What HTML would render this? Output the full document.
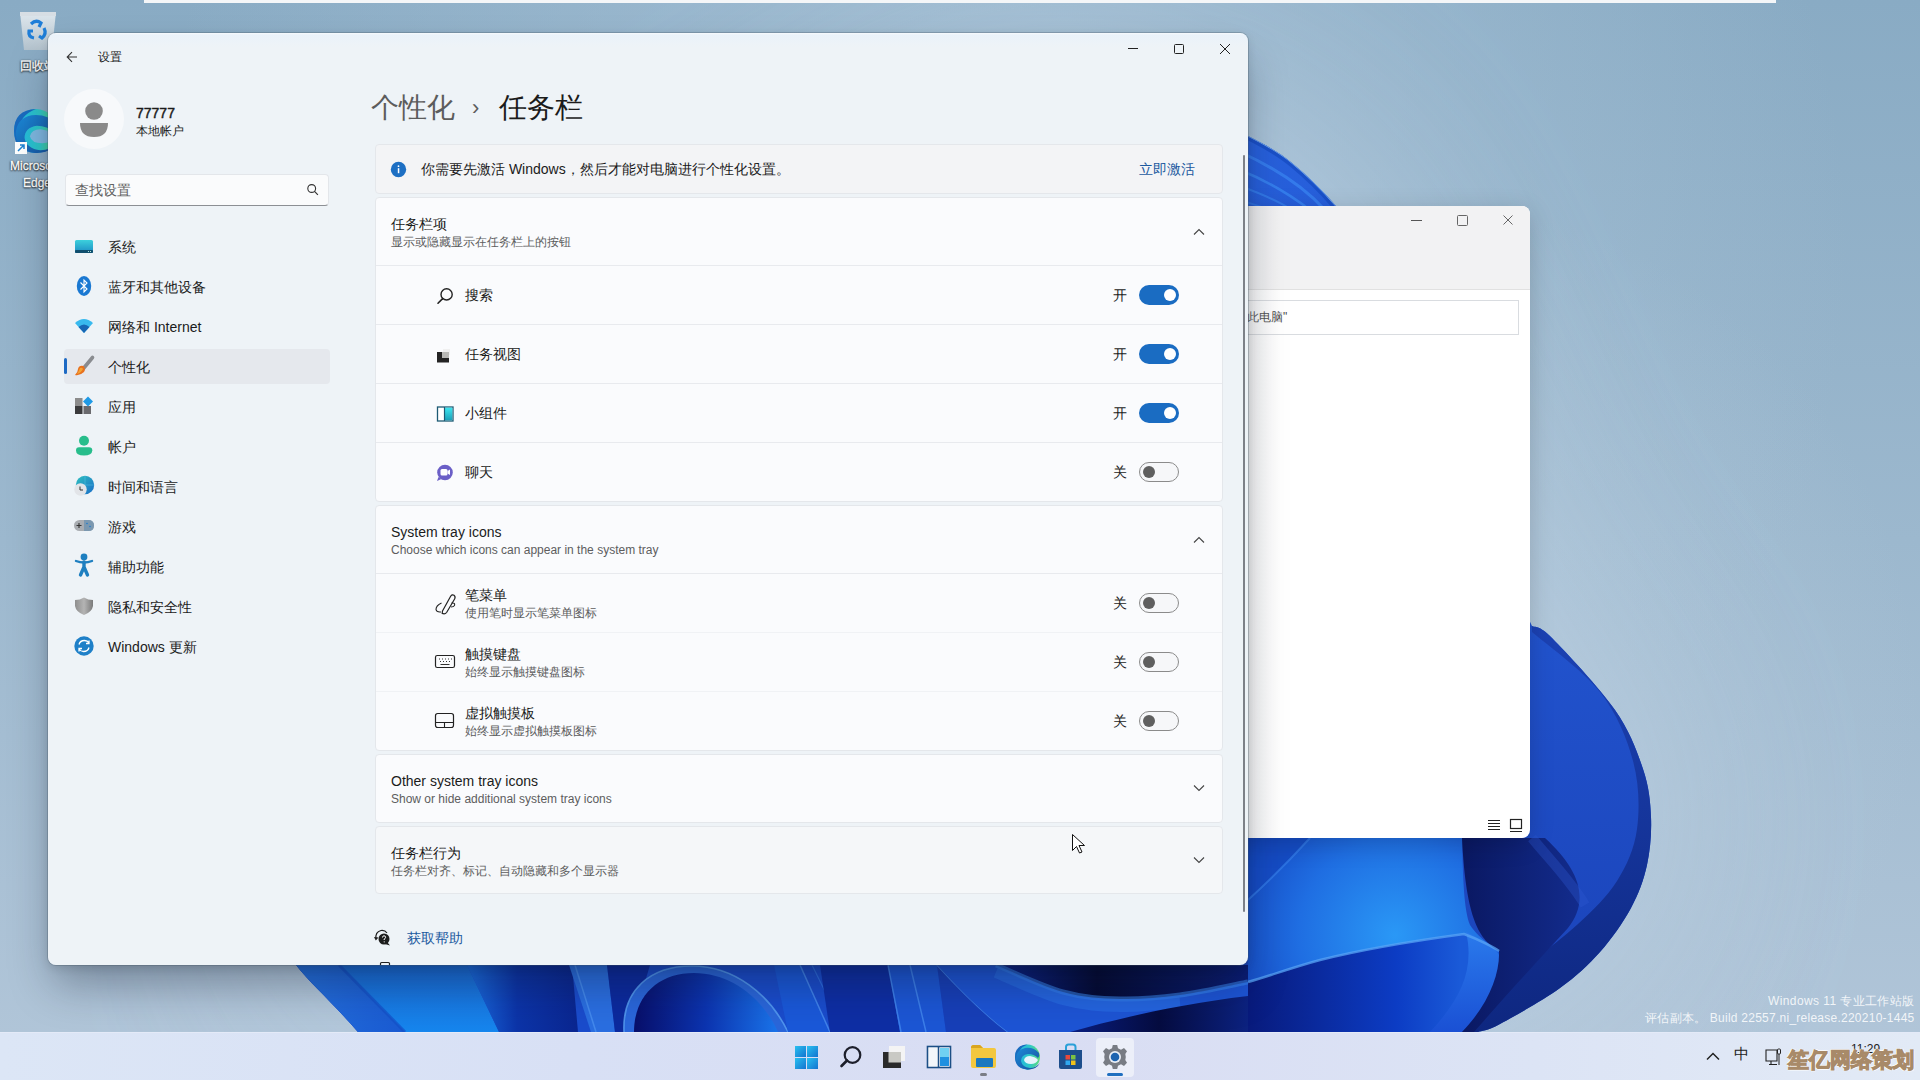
<!DOCTYPE html>
<html><head><meta charset="utf-8">
<style>
*{box-sizing:border-box;margin:0;padding:0}
html,body{width:1920px;height:1080px;overflow:hidden}
body{position:relative;font-family:"Liberation Sans",sans-serif;background:#9ab8cf;color:#1b1b1b}
.a{position:absolute}
#wall{position:absolute;left:0;top:0;width:1920px;height:1080px}
#topbar{position:absolute;left:144px;top:0;width:1632px;height:3px;background:#f4f6f8}
#win2{position:absolute;left:1230px;top:206px;width:300px;height:632px;background:#fff;border-radius:8px;box-shadow:0 6px 24px rgba(0,0,0,.18);overflow:hidden}
#win{position:absolute;left:48px;top:33px;width:1200px;height:932px;background:linear-gradient(#f7fafd 0,#eaf2fa 2px,#eef3f7 14px);border-radius:8px;box-shadow:0 0 0 1px rgba(70,85,100,.3),0 24px 44px -6px rgba(10,20,40,.36),0 3px 10px rgba(0,0,0,.12);overflow:hidden}
#wc{position:absolute;left:-48px;top:-33px;width:1920px;height:1080px}
#taskbar{position:absolute;left:0;top:1032px;width:1920px;height:48px;background:linear-gradient(90deg,#dce6f6,#d8e0f5 30%,#d9ddf3 55%,#dce4f5 80%,#e2eaf6);border-top:1px solid #e4eaf8}
.t{position:absolute;white-space:nowrap;line-height:16px;font-size:14px}
.s{font-size:12px;line-height:14px;color:#5d5d5d}
.card{position:absolute;left:375px;width:848px;background:#fafbfd;border:1px solid #e4e7eb;border-radius:4px}
.sep{position:absolute;left:376px;width:846px;height:1px;background:#e8eaee}
.tg{position:absolute;left:1139px;width:40px;height:20px;border-radius:10px}
.on{background:#1a6cc2}
.on:after{content:"";position:absolute;left:25px;top:4px;width:12px;height:12px;border-radius:6px;background:#fff}
.off{border:1px solid #8b8b8b;background:#f6f7f9}
.off:after{content:"";position:absolute;left:3px;top:3px;width:12px;height:12px;border-radius:6px;background:#5f5f5f}
.nav .t{left:108px}
</style></head>
<body>
<svg id="wall" viewBox="0 0 1920 1080" width="1920" height="1080">
<defs>
<filter id="halo" x="-50%" y="-50%" width="200%" height="200%"><feGaussianBlur stdDeviation="110"/></filter>
<linearGradient id="bg" x1="0" y1="0" x2="0" y2="1">
<stop offset="0" stop-color="#89abc4"/><stop offset=".5" stop-color="#9cb8ce"/><stop offset="1" stop-color="#b2c6d9"/>
</linearGradient>
<radialGradient id="hl" cx="1420" cy="700" r="500" gradientUnits="userSpaceOnUse">
<stop offset="0" stop-color="#b6cbdc" stop-opacity=".7"/><stop offset="1" stop-color="#b6cbdc" stop-opacity="0"/>
</radialGradient>
<radialGradient id="hl2" cx="1000" cy="250" r="850" gradientUnits="userSpaceOnUse"><stop offset="0" stop-color="#a9c3d7" stop-opacity=".85"/><stop offset=".5" stop-color="#a9c3d7" stop-opacity=".45"/><stop offset="1" stop-color="#a9c3d7" stop-opacity="0"/></radialGradient>
<linearGradient id="bl" x1="0" y1="0" x2="0" y2="1">
<stop offset="0" stop-color="#2862de"/><stop offset=".6" stop-color="#2152cc"/><stop offset="1" stop-color="#1a42b8"/>
</linearGradient>
<linearGradient id="rim" x1="0" y1="0" x2="0" y2="1">
<stop offset="0" stop-color="#1c42b4"/><stop offset="1" stop-color="#0e2780"/>
</linearGradient>
<radialGradient id="pet1" cx="1395" cy="935" r="175" gradientUnits="userSpaceOnUse">
<stop offset="0" stop-color="#2a98f6"/><stop offset=".55" stop-color="#1f6ee2"/><stop offset="1" stop-color="#1545c0"/>
</radialGradient>
<linearGradient id="strip" x1="296" y1="0" x2="1248" y2="0" gradientUnits="userSpaceOnUse">
<stop offset="0" stop-color="#2468dc"/>
<stop offset=".06" stop-color="#1d6ae4"/>
<stop offset=".14" stop-color="#2382ee"/>
<stop offset=".2" stop-color="#1656d4"/>
<stop offset=".25" stop-color="#0c2c9e"/>
<stop offset=".3" stop-color="#2c6ee2"/>
<stop offset=".36" stop-color="#0c2590"/>
<stop offset=".44" stop-color="#1a58d8"/>
<stop offset=".5" stop-color="#2a70e6"/>
<stop offset=".56" stop-color="#0e2c9c"/>
<stop offset=".63" stop-color="#2664da"/>
<stop offset=".7" stop-color="#1a56d4"/>
<stop offset=".78" stop-color="#0a1e78"/>
<stop offset=".85" stop-color="#2a74e6"/>
<stop offset=".93" stop-color="#1c4fcc"/>
<stop offset="1" stop-color="#1848c0"/>
</linearGradient>
<linearGradient id="navyg" x1="1462" y1="0" x2="1600" y2="0" gradientUnits="userSpaceOnUse"><stop offset="0" stop-color="#0a1862"/><stop offset="1" stop-color="#142f94"/></linearGradient>
<linearGradient id="s1" x1="0" y1="0" x2="1" y2="0"><stop offset="0" stop-color="#2470dc"/><stop offset="1" stop-color="#1a5ad2"/></linearGradient>
<linearGradient id="s2" x1="0" y1="0" x2="0" y2="1"><stop offset="0" stop-color="#1a6ad6"/><stop offset="1" stop-color="#1686ee"/></linearGradient>
<linearGradient id="s3" x1="0" y1="0" x2="1" y2="0"><stop offset="0" stop-color="#1a6ee2"/><stop offset=".45" stop-color="#0c34a8"/><stop offset="1" stop-color="#0a2690"/></linearGradient>
<linearGradient id="s4" x1="0" y1="0" x2="1" y2="0"><stop offset="0" stop-color="#080f6a"/><stop offset=".5" stop-color="#0c34b0"/><stop offset="1" stop-color="#1a74ea"/></linearGradient>
<linearGradient id="s5" x1="996" y1="0" x2="1248" y2="0" gradientUnits="userSpaceOnUse"><stop offset="0" stop-color="#0c2490"/><stop offset=".4" stop-color="#040a34"/><stop offset="1" stop-color="#0a1c74"/></linearGradient>
<linearGradient id="s6" x1="1070" y1="0" x2="1248" y2="0" gradientUnits="userSpaceOnUse"><stop offset="0" stop-color="#0a1e80"/><stop offset=".5" stop-color="#050c40"/><stop offset="1" stop-color="#0c2280"/></linearGradient>
<linearGradient id="low2" x1="1248" y1="0" x2="1460" y2="0" gradientUnits="userSpaceOnUse"><stop offset="0" stop-color="#081a7c"/><stop offset=".7" stop-color="#0c3cc4"/><stop offset="1" stop-color="#1a5ad8"/></linearGradient>
<linearGradient id="lipg" x1="0" y1="0" x2="0" y2="1"><stop offset="0" stop-color="#2a7aec"/><stop offset="1" stop-color="#1a50d4"/></linearGradient>
<linearGradient id="stripv" x1="0" y1="965" x2="0" y2="1032" gradientUnits="userSpaceOnUse">
<stop offset="0" stop-color="#000" stop-opacity=".12"/><stop offset="1" stop-color="#000" stop-opacity="0"/>
</linearGradient>
</defs>
<rect width="1920" height="1080" fill="url(#bg)"/>
<rect width="1920" height="1080" fill="url(#hl)"/>
<rect width="1920" height="1080" fill="url(#hl2)"/>
<!-- bloom silhouette -->
<path d="M1336 206 L1532 626 C1535.3 628.0 1538.2 624.0 1552.0 638.0 C1565.8 652.0 1599.8 688.2 1615.0 710.0 C1630.2 731.8 1637.0 751.2 1643.0 769.0 C1649.0 786.8 1650.3 801.0 1651.0 817.0 C1651.7 833.0 1650.3 849.8 1647.0 865.0 C1643.7 880.2 1638.8 893.5 1631.0 908.0 C1623.2 922.5 1611.8 938.7 1600.0 952.0 C1588.2 965.3 1576.7 976.0 1560.0 988.0 C1543.3 1000.0 1513.7 1016.7 1500.0 1024.0 C1486.3 1031.3 1481.7 1030.7 1478.0 1032.0 L358 1032 C330 1000 312 985 296 965 L300 500 L1000 80 C1120 95 1200 112 1248 136 C1268 146 1280 153 1292 163 C1308 176 1322 190 1336 206 Z" fill="#b9cee0" opacity=".9" filter="url(#halo)"/>
<path d="M1336 206 L1532 626 C1535.3 628.0 1538.2 624.0 1552.0 638.0 C1565.8 652.0 1599.8 688.2 1615.0 710.0 C1630.2 731.8 1637.0 751.2 1643.0 769.0 C1649.0 786.8 1650.3 801.0 1651.0 817.0 C1651.7 833.0 1650.3 849.8 1647.0 865.0 C1643.7 880.2 1638.8 893.5 1631.0 908.0 C1623.2 922.5 1611.8 938.7 1600.0 952.0 C1588.2 965.3 1576.7 976.0 1560.0 988.0 C1543.3 1000.0 1513.7 1016.7 1500.0 1024.0 C1486.3 1031.3 1481.7 1030.7 1478.0 1032.0 L358 1032 C330 1000 312 985 296 965 L300 500 L1000 80 C1120 95 1200 112 1248 136 C1268 146 1280 153 1292 163 C1308 176 1322 190 1336 206 Z" fill="url(#bl)"/>
<clipPath id="bclip"><path d="M1336 206 L1532 626 C1535.3 628.0 1538.2 624.0 1552.0 638.0 C1565.8 652.0 1599.8 688.2 1615.0 710.0 C1630.2 731.8 1637.0 751.2 1643.0 769.0 C1649.0 786.8 1650.3 801.0 1651.0 817.0 C1651.7 833.0 1650.3 849.8 1647.0 865.0 C1643.7 880.2 1638.8 893.5 1631.0 908.0 C1623.2 922.5 1611.8 938.7 1600.0 952.0 C1588.2 965.3 1576.7 976.0 1560.0 988.0 C1543.3 1000.0 1513.7 1016.7 1500.0 1024.0 C1486.3 1031.3 1481.7 1030.7 1478.0 1032.0 L358 1032 C330 1000 312 985 296 965 L300 500 L1000 80 C1120 95 1200 112 1248 136 C1268 146 1280 153 1292 163 C1308 176 1322 190 1336 206 Z"/></clipPath>
<g clip-path="url(#bclip)">
<path d="M1248 136 C1268 146 1280 153 1292 163 C1308 176 1322 190 1336 206" fill="none" stroke="#1a50c8" stroke-width="8"/>
<path d="M1240 152 C1275 168 1305 188 1325 210" fill="none" stroke="#3a86f2" stroke-width="3" opacity=".7"/>
<path d="M1240 170 C1270 182 1292 196 1310 210" fill="none" stroke="#3a8af4" stroke-width="2.5" opacity=".7"/>
<path d="M1240 186 C1262 194 1280 202 1292 210" fill="none" stroke="#3a8af4" stroke-width="2" opacity=".6"/>
<path d="M1240 200 C1252 204 1262 207 1270 210" fill="none" stroke="#3a8af4" stroke-width="2" opacity=".5"/>
<path d="M1248 136 C1268 146 1280 153 1292 163 C1308 176 1322 190 1336 206" fill="none" stroke="#8cc0f4" stroke-width="1.2" opacity=".8"/>
</g>
<!-- right rim -->
<path d="M1532.0 626.0 C1535.3 628.0 1538.2 624.0 1552.0 638.0 C1565.8 652.0 1599.8 688.2 1615.0 710.0 C1630.2 731.8 1637.0 751.2 1643.0 769.0 C1649.0 786.8 1650.3 801.0 1651.0 817.0 C1651.7 833.0 1650.3 849.8 1647.0 865.0 C1643.7 880.2 1638.8 893.5 1631.0 908.0 C1623.2 922.5 1611.8 938.7 1600.0 952.0 C1588.2 965.3 1576.7 976.0 1560.0 988.0 C1543.3 1000.0 1513.7 1016.7 1500.0 1024.0 C1486.3 1031.3 1481.7 1030.7 1478.0 1032.0 L1420.0 1032.0 C1430.0 1025.3 1461.3 1004.0 1480.0 992.0 C1498.7 980.0 1515.7 971.3 1532.0 960.0 C1548.3 948.7 1563.8 937.2 1578.0 924.0 C1592.2 910.8 1607.2 896.8 1617.0 881.0 C1626.8 865.2 1634.3 849.0 1637.0 829.0 C1639.7 809.0 1639.2 783.8 1633.0 761.0 C1626.8 738.2 1616.8 713.5 1600.0 692.0 C1583.2 670.5 1543.3 642.0 1532.0 632.0 Z" fill="url(#rim)"/>
<!-- under win2 -->
<path d="M1248 838 L1462 838 C1463 880 1464 910 1470 925 C1480 940 1495 948 1499 951 L1464 934 C1420 940 1360 950 1320 960 C1290 968 1270 976 1248 982 Z" fill="url(#pet1)"/>
<path d="M1248 838 L1310 838 C1290 860 1270 880 1248 900Z" fill="#1448c0" opacity=".75"/>
<path d="M1310 838 C1290 860 1270 880 1248 900" fill="none" stroke="#3a86ee" stroke-width="2" opacity=".6"/>
<path d="M1248 982 C1270 976 1290 968 1320 960 C1360 950 1420 940 1464 934 L1499 951 C1500 975 1490 1005 1462 1032 L1248 1032 Z" fill="url(#low2)"/>
<path d="M1466 932 C1485 942 1500 948 1500 960 C1498 990 1485 1012 1462 1032 L1430 1032 C1460 1000 1475 970 1466 932Z" fill="url(#lipg)"/>
<path d="M1462 838 L1545 838 C1580 870 1590 900 1568 928 C1548 950 1515 985 1474 1032 L1462 1032 C1488 1005 1500 975 1499 951 C1480 940 1466 921 1462 838 Z" fill="url(#navyg)"/>
<path d="M1248 982 C1270 976 1290 968 1320 960 C1360 950 1420 940 1464 934 C1480 940 1495 948 1499 951" fill="none" stroke="#58a4f6" stroke-width="2.5" opacity=".75"/>
<path d="M1532 838 C1550 860 1570 880 1585 905" fill="none" stroke="#2d5ad0" stroke-width="10" opacity=".35"/>
<!-- bottom strip -->
<clipPath id="sclip"><path d="M296 965 L1248 965 L1248 1032 L358 1032 C330 1000 312 985 296 965Z"/></clipPath>
<g clip-path="url(#sclip)">
<rect x="290" y="960" width="960" height="80" fill="#1a4ccc"/>
<path d="M290 960 L339 965 L405 1032 L350 1032Z" fill="url(#s1)"/>
<path d="M339 965 L467 965 L499 1032 L405 1032Z" fill="url(#s2)"/>
<path d="M467 965 L572 965 L578 1032 L499 1032Z" fill="url(#s3)"/>
<path d="M339 965 L405 1032" stroke="#1550c8" stroke-width="3" opacity=".7"/>
<path d="M569 965 L607 965 L615 1032 L591 1032Z" fill="#2a6ee0"/>
<path d="M575 965 L596 1032" stroke="#4a90f0" stroke-width="1.5" opacity=".8"/>
<path d="M607 965 L650 965 L630 1032 L615 1032Z" fill="#0c2a9e"/>
<path d="M624 1032 C622 990 650 966 692 966 C735 966 770 995 788 1032Z" fill="#2a66da"/>
<path d="M624 1032 C622 990 650 966 692 966 C735 966 770 995 788 1032" fill="none" stroke="#5aa2f4" stroke-width="1.6" opacity=".8"/>
<path d="M634 1032 C634 996 658 973 694 973 C732 973 764 1000 778 1032Z" fill="url(#s4)"/>
<path d="M788 1032 L774 965 L800 965 L830 1032Z" fill="#1a58d8"/>
<path d="M800 965 L830 1032" stroke="#4a8ef0" stroke-width="1.5" opacity=".8"/>
<path d="M812 965 L845 1032" stroke="#3a80ea" stroke-width="1.2" opacity=".6"/>
<path d="M830 1032 L820 965 L888 965 L900 1032Z" fill="#0e2ea4"/>
<path d="M888 965 L937 965 L946 1032 L900 1032Z" fill="#1c56d4"/>
<path d="M888 965 L901 1032M910 965 L926 1032" stroke="#4a90f2" stroke-width="1.5" opacity=".7"/>
<path d="M937 965 C960 990 985 1015 1008 1032 L946 1032Z" fill="#173fb8"/>
<path d="M937 965 C960 990 985 1015 1008 1032" stroke="#4a8ef0" stroke-width="1.5" fill="none" opacity=".8"/>
<path d="M937 965 L1248 965 L1248 1032 L1008 1032 C985 1015 960 990 937 965Z" fill="#1d54d4"/>
<path d="M996.0 965.0 C1007.2 969.5 1042.3 986.3 1063.0 992.0 C1083.7 997.7 1100.5 998.5 1120.0 999.0 C1139.5 999.5 1158.7 997.8 1180.0 995.0 C1201.3 992.2 1236.7 984.2 1248.0 982.0 L1248 965 L996 965Z" fill="url(#s5)"/>
<path d="M996.0 965.0 C1007.2 969.5 1042.3 986.3 1063.0 992.0 C1083.7 997.7 1100.5 998.5 1120.0 999.0 C1139.5 999.5 1158.7 997.8 1180.0 995.0 C1201.3 992.2 1236.7 984.2 1248.0 982.0" fill="none" stroke="#3a8af0" stroke-width="5" opacity=".55"/>
<path d="M996.0 965.0 C1007.2 969.5 1042.3 986.3 1063.0 992.0 C1083.7 997.7 1100.5 998.5 1120.0 999.0 C1139.5 999.5 1170.0 995.7 1180.0 995.0" fill="none" stroke="#2c74e8" stroke-width="12" opacity=".5" transform="translate(0,7)"/>
<path d="M1070 1032 C1120 1018 1180 1004 1248 996 L1248 1032Z" fill="url(#s6)"/>
</g>
</svg>



<div id="topbar"></div>
<div id="desk">
  <svg class="a" style="left:0;top:0" width="60" height="200" viewBox="0 0 60 200">
    <defs><linearGradient id="bin" x1="0" y1="0" x2="0" y2="1"><stop offset="0" stop-color="#e8eef2"/><stop offset="1" stop-color="#b9c6cf"/></linearGradient></defs>
    <path d="M20 12H56L52 50H24Z" fill="url(#bin)" opacity=".9"/>
    <path d="M20 12H56V16H20Z" fill="#d7dee4"/>
    <path d="M31 24Q36 19 41 23L39 27M44 28Q47 34 42 38L39 36M34 38Q28 37 29 31L33 31" fill="none" stroke="#1f7ed8" stroke-width="3.2"/>
    <g transform="translate(36,131) scale(1.76) translate(-1027.5,-1056)">
    <circle cx="1027.5" cy="1056" r="12.5" fill="url(#edt)"/>
    <path d="M1015 1056Q1015 1044 1027.5 1043.5Q1018 1047 1018 1056Q1019 1066 1028 1068Q1035 1068.5 1040 1062Q1036 1068.5 1027.5 1068.5Q1015 1068 1015 1056Z" fill="#1a6bbf"/>
    <path d="M1016 1058Q1016 1049 1025 1047Q1034 1046 1039 1052Q1040 1055 1038 1057Q1034 1053 1028 1053Q1021 1054 1021 1060Q1022 1066 1030 1067Q1036 1067 1040 1062Q1036 1069 1027 1068.5Q1017 1067 1016 1058Z" fill="url(#edb)"/>
    <path d="M1024 1059Q1025 1055 1030 1055Q1036 1056 1038 1059Q1036 1063 1031 1063Q1025 1063 1024 1059Z" fill="#7fb8e0"/>
    </g>
    <rect x="15" y="142" width="12" height="12" fill="#fff"/><path d="M18 151L24 145M20 145H24V149" stroke="#1c84d4" stroke-width="1.5" fill="none"/>
  </svg>
  <div class="t" style="left:20px;top:59px;font-size:12px;line-height:14px;color:#fff;-webkit-text-stroke:.3px #fff;text-shadow:0 1px 2px #000,0 0 2px #000">回收站</div>
  <div class="t" style="left:10px;top:159px;font-size:12px;line-height:14px;color:#fff;-webkit-text-stroke:.3px #fff;text-shadow:0 1px 2px #000,0 0 2px #000">Microsoft</div>
  <div class="t" style="left:23px;top:176px;font-size:12px;line-height:14px;color:#fff;-webkit-text-stroke:.3px #fff;text-shadow:0 1px 2px #000,0 0 2px #000">Edge</div>
</div>
<div class="t" style="left:1768px;top:994px;font-size:12px;line-height:14px;letter-spacing:.4px;color:rgba(255,255,255,.85)">Windows 11 专业工作站版</div>
<div class="t" style="left:1645px;top:1011px;font-size:12px;line-height:14px;letter-spacing:.25px;color:rgba(255,255,255,.85)">评估副本。 Build 22557.ni_release.220210-1445</div>

<div id="win2">
  <div class="a" style="left:0;top:0;width:300px;height:84px;background:#f2f2f3;border-bottom:1px solid #e1e1e1"></div>
  <svg class="a" style="left:170px;top:0px" width="130" height="24" viewBox="0 0 130 24">
    <path d="M11 14.5H22" stroke="#555" stroke-width="1"/>
    <rect x="57.5" y="9.5" width="10" height="10" rx="1" fill="none" stroke="#666" stroke-width="1"/>
    <path d="M103.5 9.5L112.5 18.5M112.5 9.5L103.5 18.5" stroke="#666" stroke-width="1"/>
  </svg>
  <div class="a" style="left:-10px;top:94px;width:299px;height:35px;border:1px solid #d9dce0;background:#fff"></div>
    <div class="t" style="left:15px;top:104px;font-size:12px;line-height:14px;color:#4a4a4a;left:17px">此电脑"</div>
  <svg class="a" style="left:256px;top:612px" width="40" height="16" viewBox="0 0 40 16">
    <path d="M2 2.5H14M2 5.5H14M2 8.5H14M2 11.5H14" stroke="#222" stroke-width="1"/>
    <rect x="24.5" y="1.5" width="11" height="9" fill="none" stroke="#222" stroke-width="1.2"/><path d="M24 13.5H36" stroke="#222" stroke-width="1"/>
  </svg>
  <div class="a" style="left:0;top:0;width:50px;height:632px;background:linear-gradient(90deg,rgba(170,170,170,.38),rgba(205,205,205,.14) 40%,rgba(255,255,255,0))"></div>
</div>
<div id="win"><div id="wc">
  <!-- title bar -->
  <svg class="a" style="left:64px;top:49px" width="16" height="16" viewBox="0 0 16 16"><path d="M13 8H3.5M8 3.2L3.2 8 8 12.8" fill="none" stroke="#333" stroke-width="1.1"/></svg>
  <div class="t" style="left:98px;top:49px;font-size:12px">设置</div>
  <svg class="a" style="left:1120px;top:40px" width="120" height="20" viewBox="0 0 120 20">
    <path d="M8 8.5H18" stroke="#222" stroke-width="1"/>
    <rect x="54.5" y="4.5" width="9" height="9" rx="1" fill="none" stroke="#222" stroke-width="1"/>
    <path d="M100 4L110 14M110 4L100 14" stroke="#222" stroke-width="1"/>
  </svg>
  <!-- profile -->
  <div class="a" style="left:64px;top:89px;width:60px;height:60px;border-radius:30px;background:#f7f9fb"></div>
  <svg class="a" style="left:64px;top:89px" width="60" height="60" viewBox="0 0 60 60"><circle cx="30" cy="22" r="8.8" fill="#8a8a8a"/><path d="M16 34H44Q44 48 30 48Q16 48 16 34Z" fill="#8a8a8a"/></svg>
  <div class="t" style="left:136px;top:105px;font-size:14px;-webkit-text-stroke:.45px #1b1b1b">77777</div>
  <div class="t" style="left:136px;top:123px;font-size:12px">本地帐户</div>
  <!-- search -->
  <div class="a" style="left:65px;top:174px;width:264px;height:32px;background:#fafbfc;border:1px solid #e3e6ea;border-bottom:1px solid #8c8f94;border-radius:4px"></div>
  <div class="t" style="left:75px;top:182px;color:#5f5f5f">查找设置</div>
  <svg class="a" style="left:305px;top:182px" width="16" height="16" viewBox="0 0 16 16"><circle cx="6.7" cy="6.5" r="3.9" fill="none" stroke="#333" stroke-width="1.1"/><path d="M9.5 9.4L12.9 12.8" stroke="#333" stroke-width="1.2"/></svg>
  <!-- nav -->
  <div class="a" style="left:64px;top:349px;width:266px;height:35px;background:#e5e8ed;border-radius:4px"></div>
  <div class="a" style="left:64px;top:358px;width:3px;height:16px;background:#1d6ac4;border-radius:2px"></div>
  <div class="nav">
    <div class="t" style="top:239px">系统</div>
    <div class="t" style="top:279px">蓝牙和其他设备</div>
    <div class="t" style="top:319px">网络和 Internet</div>
    <div class="t" style="top:359px">个性化</div>
    <div class="t" style="top:399px">应用</div>
    <div class="t" style="top:439px">帐户</div>
    <div class="t" style="top:479px">时间和语言</div>
    <div class="t" style="top:519px">游戏</div>
    <div class="t" style="top:559px">辅助功能</div>
    <div class="t" style="top:599px">隐私和安全性</div>
    <div class="t" style="top:639px">Windows 更新</div>
  </div>
  <!-- header -->
  <div class="t" style="left:371px;top:91px;font-size:28px;line-height:34px;color:#5c5c5c">个性化</div>
  <div class="t" style="left:472px;top:91px;font-size:22px;line-height:34px;color:#5c5c5c">›</div>
  <div class="t" style="left:499px;top:91px;font-size:28px;line-height:34px">任务栏</div>
  <!-- info bar -->
  <div class="card" style="top:144px;height:50px;background:#f3f4f6"></div>
  <svg class="a" style="left:390px;top:161px" width="17" height="17" viewBox="0 0 17 17"><circle cx="8.5" cy="8.5" r="7.7" fill="#1d6fc3"/><rect x="7.8" y="7.2" width="1.5" height="5" fill="#fff"/><circle cx="8.5" cy="5.2" r=".9" fill="#fff"/></svg>
  <div class="t" style="left:421px;top:161px">你需要先激活 Windows，然后才能对电脑进行个性化设置。</div>
  <div class="t" style="left:1139px;top:161px;color:#1c5a9f">立即激活</div>
  <!-- card 1 -->
  <div class="card" style="top:197px;height:305px"></div>
  <div class="t" style="left:391px;top:216px">任务栏项</div>
  <div class="t s" style="left:391px;top:235px">显示或隐藏显示在任务栏上的按钮</div>
  <svg class="a" style="left:1192px;top:226px" width="14" height="12" viewBox="0 0 14 12"><path d="M2 8.5L7 3.5L12 8.5" fill="none" stroke="#444" stroke-width="1.1"/></svg>
  <div class="sep" style="top:265px"></div>
  <div class="sep" style="top:324px"></div>
  <div class="sep" style="top:383px"></div>
  <div class="sep" style="top:442px"></div>
  <div class="t" style="left:465px;top:287px">搜索</div>
  <div class="t" style="left:465px;top:346px">任务视图</div>
  <div class="t" style="left:465px;top:405px">小组件</div>
  <div class="t" style="left:465px;top:464px">聊天</div>
  <div class="t" style="left:1113px;top:287px">开</div>
  <div class="t" style="left:1113px;top:346px">开</div>
  <div class="t" style="left:1113px;top:405px">开</div>
  <div class="t" style="left:1113px;top:464px">关</div>
  <div class="tg on" style="top:285px"></div>
  <div class="tg on" style="top:344px"></div>
  <div class="tg on" style="top:403px"></div>
  <div class="tg off" style="top:462px"></div>
  <!-- card 2 -->
  <div class="card" style="top:505px;height:246px"></div>
  <div class="t" style="left:391px;top:524px">System tray icons</div>
  <div class="t s" style="left:391px;top:543px">Choose which icons can appear in the system tray</div>
  <svg class="a" style="left:1192px;top:534px" width="14" height="12" viewBox="0 0 14 12"><path d="M2 8.5L7 3.5L12 8.5" fill="none" stroke="#444" stroke-width="1.1"/></svg>
  <div class="sep" style="top:573px"></div>
  <div class="sep" style="top:632px;background:#f0f2f5"></div>
  <div class="sep" style="top:691px;background:#f0f2f5"></div>
  <div class="t" style="left:465px;top:587px">笔菜单</div>
  <div class="t s" style="left:465px;top:606px">使用笔时显示笔菜单图标</div>
  <div class="t" style="left:465px;top:646px">触摸键盘</div>
  <div class="t s" style="left:465px;top:665px">始终显示触摸键盘图标</div>
  <div class="t" style="left:465px;top:705px">虚拟触摸板</div>
  <div class="t s" style="left:465px;top:724px">始终显示虚拟触摸板图标</div>
  <div class="t" style="left:1113px;top:595px">关</div>
  <div class="t" style="left:1113px;top:654px">关</div>
  <div class="t" style="left:1113px;top:713px">关</div>
  <div class="tg off" style="top:593px"></div>
  <div class="tg off" style="top:652px"></div>
  <div class="tg off" style="top:711px"></div>
  <!-- card 3 -->
  <div class="card" style="top:754px;height:69px"></div>
  <div class="t" style="left:391px;top:773px">Other system tray icons</div>
  <div class="t s" style="left:391px;top:792px">Show or hide additional system tray icons</div>
  <svg class="a" style="left:1192px;top:782px" width="14" height="12" viewBox="0 0 14 12"><path d="M2 3.5L7 8.5L12 3.5" fill="none" stroke="#444" stroke-width="1.1"/></svg>
  <!-- card 4 -->
  <div class="card" style="top:826px;height:68px;background:#f5f7f9"></div>
  <div class="t" style="left:391px;top:845px">任务栏行为</div>
  <div class="t s" style="left:391px;top:864px">任务栏对齐、标记、自动隐藏和多个显示器</div>
  <svg class="a" style="left:1192px;top:854px" width="14" height="12" viewBox="0 0 14 12"><path d="M2 3.5L7 8.5L12 3.5" fill="none" stroke="#444" stroke-width="1.1"/></svg>
  <!-- help -->
  <div class="t" style="left:407px;top:930px;color:#1c5a9f">获取帮助</div>
  <!-- sidebar icons -->
  <svg class="a" style="left:0;top:0" width="1248" height="965" viewBox="0 0 1248 965">
    <defs>
      <linearGradient id="sys" x1="0" y1="0" x2="0" y2="1"><stop offset="0" stop-color="#3cd0dc"/><stop offset="1" stop-color="#1c8cc4"/></linearGradient>
      <linearGradient id="glb" x1="0" y1="0" x2="1" y2="1"><stop offset="0" stop-color="#2fc1c0"/><stop offset="1" stop-color="#1a6cc8"/></linearGradient>
      <linearGradient id="shd" x1="0" y1="0" x2="1" y2="0"><stop offset="0" stop-color="#8e8e8e"/><stop offset=".5" stop-color="#b4b4b4"/><stop offset="1" stop-color="#7a7a7a"/></linearGradient>
      <linearGradient id="wdg" x1="0" y1="0" x2="0" y2="1"><stop offset="0" stop-color="#3ee6f0"/><stop offset="1" stop-color="#1aa0b8"/></linearGradient>
    </defs>
    <!-- system -->
    <rect x="75" y="240" width="18" height="13" rx="1.5" fill="url(#sys)"/>
    <rect x="75" y="250" width="18" height="3" rx="1" fill="#0f4e6e"/>
    <circle cx="88.5" cy="251.5" r=".6" fill="#cfe"/><circle cx="90.5" cy="251.5" r=".6" fill="#cfe"/>
    <!-- bluetooth -->
    <ellipse cx="84" cy="286" rx="7.2" ry="10" fill="#1a78d2"/>
    <path d="M80.5 282.5L87 289L84 292V280L87 283L80.5 289.5" fill="none" stroke="#fff" stroke-width="1.1"/>
    <!-- wifi -->
    <path d="M75 323Q84 315 93 323L84 333Z" fill="#38b9ee"/>
    <path d="M78.5 327Q84 322 89.5 327L84 333Z" fill="#1766b4"/>
    <!-- brush -->
    <path d="M92.5 357.5L83 369" stroke="#8a8c90" stroke-width="3.6" stroke-linecap="round"/>
    <path d="M83.5 366Q86 369 84 372Q80 376 75 375Q78 372 78 369Q79 365 83.5 366Z" fill="#e8711e"/>
    <path d="M80 368Q82 367 83 369Q81 373 77 374Q79 371 80 368Z" fill="#f6b23a" opacity=".8"/>
    <!-- apps -->
    <rect x="75" y="398" width="7.5" height="8" fill="#8c8c8c"/>
    <rect x="75" y="406" width="7.5" height="8" fill="#3a3a3c"/>
    <rect x="83.5" y="406" width="7.5" height="8" fill="#6a6a6e"/>
    <path d="M88 396.5L93 401.5L88 406.5L83 401.5Z" fill="#1f9ae6"/>
    <!-- account -->
    <circle cx="84" cy="440.7" r="5" fill="#27bd8b"/>
    <path d="M76 450.5Q76 447.3 79 447.3H89Q92.3 447.3 92.3 450.5Q92 455.5 84 455.5Q76 455.5 76 450.5Z" fill="#27bd8b"/>
    <!-- time -->
    <circle cx="85" cy="485" r="9.2" fill="url(#glb)"/>
    <path d="M85 476V494M76 485H94" stroke="#6fd4f0" stroke-width=".6" opacity=".6"/>
    <circle cx="80.5" cy="489.5" r="6.2" fill="#e2e4e8"/>
    <path d="M80 486.5V490H83" fill="none" stroke="#333" stroke-width="1"/>
    <!-- games -->
    <rect x="74" y="520" width="20" height="11" rx="5.5" fill="#a9adb2"/>
    <path d="M84 520H88.5Q94 520 94 525.5Q94 531 88.5 531H84Z" fill="#7b98b0"/>
    <path d="M76.5 525.5H81.5M79 523V528" stroke="#333" stroke-width="1.1"/>
    <circle cx="87" cy="523.5" r=".8" fill="#1f7acc"/><circle cx="90" cy="526.5" r=".8" fill="#1f7acc"/>
    <!-- accessibility -->
    <circle cx="84" cy="557" r="3.4" fill="#1e7fc0"/>
    <path d="M76 561Q80 562.5 84 562.5Q88 562.5 92 561" fill="none" stroke="#1e7fc0" stroke-width="2.4" stroke-linecap="round"/>
    <path d="M84 562V568M84 567L80.5 575M84 567L87.5 575" fill="none" stroke="#1e7fc0" stroke-width="3.4" stroke-linecap="round"/>
    <!-- shield -->
    <path d="M84 597.5Q88 600 93 600V606Q92 612 84 615Q76 612 75 606V600Q80 600 84 597.5Z" fill="url(#shd)"/>
    <!-- update -->
    <circle cx="84" cy="646" r="9.7" fill="#1f80c8"/>
    <path d="M79 644.5Q80 640.5 84.5 640.5Q87.5 640.5 89 643M89 640.5V643.5H86M89 647.5Q88 651.5 83.5 651.5Q80.5 651.5 79 649M79 651.5V648.5H82" fill="none" stroke="#fff" stroke-width="1.3"/>
    <!-- row icons -->
    <circle cx="446.6" cy="294.4" r="5.6" fill="none" stroke="#222" stroke-width="1.4"/>
    <path d="M442.6 298.6L438 303.2" stroke="#222" stroke-width="1.6" stroke-linecap="round"/>
    <rect x="443" y="349" width="7" height="6" fill="#f0f0f0"/>
    <rect x="437" y="352" width="12" height="10.5" fill="#242424"/>
    <rect x="442" y="352" width="7" height="6" fill="#b9b9b6"/>
    <rect x="437.5" y="407" width="15.5" height="14" fill="#fff" stroke="#1d5a74" stroke-width="1.3"/>
    <rect x="444.5" y="407.7" width="7.8" height="12.6" fill="url(#wdg)"/>
    <path d="M444.5 407V421" stroke="#1d5a74" stroke-width="1.2"/>
    <circle cx="445" cy="472.5" r="7.8" fill="#6b5fc7"/>
    <path d="M438.5 477L437 481L441.5 479Z" fill="#6b5fc7"/>
    <rect x="440.5" y="469" width="7" height="6.5" rx="1.5" fill="#fff"/>
    <path d="M447.5 471L450 469.5V475L447.5 473.5Z" fill="#fff"/>
    <path d="M442.5 611L450.5 596.5Q452 594 454 595.2Q455.8 596.6 454.6 599L446.6 612.5Q445 614.5 442.2 613.4Z" fill="none" stroke="#222" stroke-width="1.2"/>
    <path d="M441.5 603Q436 605.5 436 609.5Q436.5 612.5 441 612M451.5 603Q455.5 602.5 454.5 605.5Q453.5 607 451 607" fill="none" stroke="#222" stroke-width="1.1"/>
    <rect x="435.5" y="655.5" width="19" height="12" rx="1.8" fill="none" stroke="#222" stroke-width="1.2"/>
    <path d="M439 659H440M442 659H443M445 659H446M448 659H449M451 659H452M440 661.5H441M443 661.5H444M446 661.5H447M449 661.5H450M440.5 664.5H449.5" stroke="#333" stroke-width="1"/>
    <rect x="435.5" y="713.5" width="18" height="14" rx="2.2" fill="none" stroke="#222" stroke-width="1.2"/>
    <path d="M435.5 722.5H453.5M444.5 722.5V727.5" stroke="#222" stroke-width="1.1"/>
    <!-- help -->
    <circle cx="384" cy="939" r="5.5" fill="#1d1d1d"/>
    <path d="M387.5 942.5L390 945.5L385 944Z" fill="#1d1d1d"/>
    <path d="M376 939Q375 932 381 930.5Q385 930 387 933" fill="none" stroke="#1d1d1d" stroke-width="1.2"/>
    <path d="M374 937L375.8 940.5L378.5 937.5" fill="#1d1d1d"/>
    <path d="M382.5 937.5Q382.5 935.8 384 935.8Q385.6 935.8 385.6 937.3Q385.6 938.5 384.2 939V940" fill="none" stroke="#fff" stroke-width="1"/>
    <circle cx="384.2" cy="941.8" r=".6" fill="#fff"/>
    <rect x="380.5" y="962.5" width="9" height="6" rx="1" fill="none" stroke="#222" stroke-width="1.2"/>
  </svg>
  <!-- scrollbar -->
  <div class="a" style="left:1242.5px;top:155px;width:2.5px;height:757px;background:#7d8188;border-radius:2px"></div>
</div></div>
<div id="taskbar">
  <div class="a" style="left:1096px;top:5px;width:38px;height:39px;background:#eceff9;border-radius:4px"></div>
  <svg class="a" style="left:0;top:0" width="1920" height="48" viewBox="0 1032 1920 48">
    <defs>
      <linearGradient id="wl" x1="0" y1="0" x2="1" y2="1"><stop offset="0" stop-color="#28c0f0"/><stop offset="1" stop-color="#1473d0"/></linearGradient>
      <linearGradient id="edg" x1="0" y1="0" x2="1" y2="1"><stop offset="0" stop-color="#37c6e8"/><stop offset=".5" stop-color="#1e8fd6"/><stop offset="1" stop-color="#1b5fb0"/></linearGradient>
    </defs>
    <!-- windows logo -->
    <rect x="795" y="1045" width="11" height="11" fill="url(#wl)"/><rect x="807" y="1045" width="11" height="11" fill="url(#wl)"/>
    <rect x="795" y="1057" width="11" height="11" fill="url(#wl)"/><rect x="807" y="1057" width="11" height="11" fill="url(#wl)"/>
    <!-- search -->
    <circle cx="852.5" cy="1054" r="7.8" fill="none" stroke="#1d1f2b" stroke-width="2.2"/><path d="M847 1059.5L841.5 1065" stroke="#1d1f2b" stroke-width="2.6" stroke-linecap="round"/>
    <!-- task view -->
    <rect x="889" y="1045" width="16" height="15" fill="#f4f4f4"/>
    <rect x="883" y="1051" width="18" height="16" fill="#2a2a2a"/>
    <rect x="888.5" y="1051" width="12.5" height="10.5" fill="#c9c9c4"/>
    <!-- widgets -->
    <rect x="927.5" y="1045.5" width="23" height="21" fill="#fff" stroke="#1c4f86" stroke-width="1.6"/>
    <rect x="929" y="1047" width="8" height="18" fill="#f2f6fa"/>
    <rect x="940" y="1047" width="9" height="9" fill="#6fd0f2"/><rect x="940" y="1056" width="9" height="9" fill="#1e90e0"/>
    <path d="M938.5 1046V1066" stroke="#1c4f86" stroke-width="1.6"/>
    <!-- folder -->
    <path d="M971 1046.5Q971 1044 973.5 1044H980L983 1047H994Q996 1047 996 1049V1065Q996 1067 994 1067H973Q971 1067 971 1065Z" fill="#f3c73e"/>
    <path d="M971 1046.5Q971 1044 973.5 1044H980L983 1047H971Z" fill="#d9a520"/>
    <rect x="976" y="1057" width="17" height="9" rx="1" fill="#1a78bf"/>
    <rect x="980" y="1072" width="7" height="3" rx="1.5" fill="#7a7d85"/>
    <!-- edge -->
    <defs><linearGradient id="edt" x1="0" y1="0" x2="1" y2="0"><stop offset="0" stop-color="#1fb2e6"/><stop offset=".6" stop-color="#2fc9c6"/><stop offset="1" stop-color="#62dc7a"/></linearGradient>
    <linearGradient id="edb" x1="0" y1="0" x2="1" y2="1"><stop offset="0" stop-color="#1b8ad8"/><stop offset="1" stop-color="#17509c"/></linearGradient></defs>
    <circle cx="1027.5" cy="1056" r="12.5" fill="url(#edt)"/>
    <path d="M1015 1056Q1015 1044 1027.5 1043.5Q1018 1047 1018 1056Q1019 1066 1028 1068Q1035 1068.5 1040 1062Q1036 1068.5 1027.5 1068.5Q1015 1068 1015 1056Z" fill="#1a6bbf"/>
    <path d="M1016 1058Q1016 1049 1025 1047Q1034 1046 1039 1052Q1040 1055 1038 1057Q1034 1053 1028 1053Q1021 1054 1021 1060Q1022 1066 1030 1067Q1036 1067 1040 1062Q1036 1069 1027 1068.5Q1017 1067 1016 1058Z" fill="url(#edb)"/>
    <path d="M1024 1059Q1025 1055 1030 1055Q1036 1056 1038 1059Q1036 1063 1031 1063Q1025 1063 1024 1059Z" fill="#e4f4fc"/>
    <!-- store -->
    <path d="M1066 1049V1046Q1066 1043.5 1068.5 1043.5H1073Q1075.5 1043.5 1075.5 1046V1049" fill="none" stroke="#2aa0d8" stroke-width="2"/>
    <path d="M1059 1049H1082V1066Q1082 1068 1080 1068H1061Q1059 1068 1059 1066Z" fill="#1d4e8c"/>
    <rect x="1065.5" y="1054" width="4.5" height="4.5" fill="#e8493b"/><rect x="1071" y="1054" width="4.5" height="4.5" fill="#7cc242"/>
    <rect x="1065.5" y="1059.5" width="4.5" height="4.5" fill="#2fa8f0"/><rect x="1071" y="1059.5" width="4.5" height="4.5" fill="#f2c21b"/>
    <!-- settings gear -->
    <g transform="translate(1115,1056)">
      <path d="M-2.2 -12H2.2L3 -8.7L6 -7.3L9 -9L12 -5.8L10.3 -2.9L10.8 0L10.3 2.9L12 5.8L9 9L6 7.3L3 8.7L2.2 12H-2.2L-3 8.7L-6 7.3L-9 9L-12 5.8L-10.3 2.9L-10.8 0L-10.3 -2.9L-12 -5.8L-9 -9L-6 -7.3L-3 -8.7Z" fill="#787c84"/>
      <circle r="6" fill="#e9eef6"/><circle r="4.3" fill="#1e64b0"/>
    </g>
    <rect x="1107" y="1072" width="16" height="3" rx="1.5" fill="#1f6fc0"/>
    <!-- tray -->
    <path d="M1707 1058.5L1713 1052.5L1719 1058.5" fill="none" stroke="#222" stroke-width="1.5"/>
    <path d="M1766 1049H1777V1060H1766ZM1769 1063.5H1777M1771 1060V1063.5" fill="none" stroke="#222" stroke-width="1.1"/>
    <rect x="1777.5" y="1048" width="3" height="5" rx="1" fill="none" stroke="#222" stroke-width="1"/><path d="M1779 1053V1064" stroke="#222" stroke-width="1"/>
  </svg>
  <div class="t" style="left:1734px;top:12px;font-size:15px;line-height:18px;color:#222">中</div>
  <div class="t" style="left:1851px;top:9px;font-size:12px;line-height:14px;color:#222">11:29</div>
  <div class="t" style="left:1788px;top:15px;font-size:21px;line-height:24px;font-weight:bold;color:#a88a69;-webkit-text-stroke:1.2px #a88a69;text-shadow:1px 1px 0 #fff,-1px -1px 0 #fff,1px -1px 0 #fff,-1px 1px 0 #fff">笙亿网络策划</div>
</div>
<svg class="a" style="left:1071px;top:833px" width="16" height="22" viewBox="0 0 16 22"><path d="M1.5 1.5V17.5L5.5 13.5L8.5 20L11 19L8 12.5H13.5Z" fill="#fff" stroke="#111" stroke-width="1"/></svg>
</body></html>
